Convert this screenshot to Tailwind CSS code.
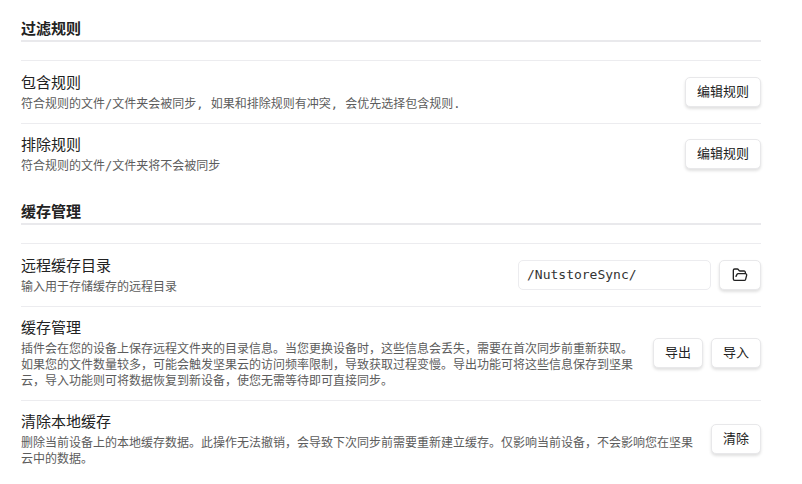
<!DOCTYPE html>
<html lang="zh-CN">
<head>
<meta charset="utf-8">
<script src="https://cdn.jsdelivr.net/npm/@tailwindcss/browser@4"></script>
</head>
<body class="bg-white font-['Inter','Noto_Sans_CJK_SC',sans-serif] text-[#222222]">
<main class="w-[802px] h-[484px] overflow-hidden pl-[21px] pr-[41px] pt-[19px]">
  <h2 class="h-[21px] text-[15px] leading-[20px] font-bold border-b-2 border-[#e9e9ec] box-content">过滤规则</h2>
  <section class="mt-[18px] flex items-center justify-between gap-4 h-[63px] border-t border-[#ececef]">
    <div>
      <div class="mb-[3px] text-[15px] leading-[20px]">包含规则</div>
      <div class="font-['DejaVu_Sans_Mono','Noto_Sans_CJK_SC',monospace] text-[12px] leading-[16px] text-[#5c5c5c]">符合规则的文件/文件夹会被同步, 如果和排除规则有冲突, 会优先选择包含规则.</div>
    </div>
    <button class="h-[30px] w-[76px] shrink-0 rounded-[5px] border border-[#e8e8ea] bg-white text-[13px] shadow-[0_2px_3px_rgba(0,0,0,0.12)]">编辑规则</button>
  </section>
  <section class="flex items-center justify-between gap-4 h-[62px] border-t border-[#ececef]">
    <div>
      <div class="mb-[3px] text-[15px] leading-[20px]">排除规则</div>
      <div class="font-['DejaVu_Sans_Mono','Noto_Sans_CJK_SC',monospace] text-[12px] leading-[16px] text-[#5c5c5c]">符合规则的文件/文件夹将不会被同步</div>
    </div>
    <button class="mb-px h-[30px] w-[76px] shrink-0 rounded-[5px] border border-[#e8e8ea] bg-white text-[13px] shadow-[0_2px_3px_rgba(0,0,0,0.12)]">编辑规则</button>
  </section>
  <h2 class="mt-[17px] h-[21px] text-[15px] leading-[20px] font-bold border-b-2 border-[#e9e9ec] box-content">缓存管理</h2>
  <section class="mt-[18px] flex items-center justify-between gap-2 h-[63px] border-t border-[#ececef]">
    <div>
      <div class="mb-[3px] text-[15px] leading-[20px]">远程缓存目录</div>
      <div class="text-[12px] leading-[16px] text-[#5c5c5c]">输入用于存储缓存的远程目录</div>
    </div>
    <div class="flex items-center gap-2 shrink-0">
      <div class="h-[30px] w-[193px] rounded-[5px] border border-[#ececef] px-2 font-['DejaVu_Sans_Mono',monospace] text-[13px] leading-[28px] text-[#333333]">/NutstoreSync/</div>
      <button aria-label="选择文件夹" class="flex h-[30px] w-[42px] items-center justify-center rounded-[5px] border border-[#e8e8ea] bg-white shadow-[0_2px_3px_rgba(0,0,0,0.12)]">
        <svg width="16" height="16" viewBox="0 0 24 24" fill="none" stroke="#222222" stroke-width="2" stroke-linecap="round" stroke-linejoin="round"><path d="m6 14 1.5-2.9A2 2 0 0 1 9.24 10H20a2 2 0 0 1 1.94 2.5l-1.54 6a2 2 0 0 1-1.95 1.5H4a2 2 0 0 1-2-2V5a2 2 0 0 1 2-2h3.9a2 2 0 0 1 1.69.9l.81 1.2a2 2 0 0 0 1.67.9H18a2 2 0 0 1 2 2v2"/></svg>
      </button>
    </div>
  </section>
  <section class="flex items-center justify-between gap-4 h-[94px] border-t border-[#ececef]">
    <div>
      <div class="mb-[3px] text-[15px] leading-[20px]">缓存管理</div>
      <div class="text-[12px] leading-[16px] text-[#5c5c5c]">插件会在您的设备上保存远程文件夹的目录信息。当您更换设备时，这些信息会丢失，需要在首次同步前重新获取。如果您的文件数量较多，可能会触发坚果云的访问频率限制，导致获取过程变慢。导出功能可将这些信息保存到坚果云，导入功能则可将数据恢复到新设备，使您无需等待即可直接同步。</div>
    </div>
    <div class="mb-px flex items-center gap-2 shrink-0">
      <button class="h-[30px] w-[50px] rounded-[5px] border border-[#e8e8ea] bg-white text-[13px] shadow-[0_2px_3px_rgba(0,0,0,0.12)]">导出</button>
      <button class="h-[30px] w-[50px] rounded-[5px] border border-[#e8e8ea] bg-white text-[13px] shadow-[0_2px_3px_rgba(0,0,0,0.12)]">导入</button>
    </div>
  </section>
  <section class="flex items-center justify-between gap-4 h-[78px] border-t border-[#ececef]">
    <div>
      <div class="mb-[3px] text-[15px] leading-[20px]">清除本地缓存</div>
      <div class="text-[12px] leading-[16px] text-[#5c5c5c]">删除当前设备上的本地缓存数据。此操作无法撤销，会导致下次同步前需要重新建立缓存。仅影响当前设备，不会影响您在坚果云中的数据。</div>
    </div>
    <button class="mb-[2px] h-[30px] w-[50px] shrink-0 rounded-[5px] border border-[#e8e8ea] bg-white text-[13px] shadow-[0_2px_3px_rgba(0,0,0,0.12)]">清除</button>
  </section>
</main>
</body>
</html>
